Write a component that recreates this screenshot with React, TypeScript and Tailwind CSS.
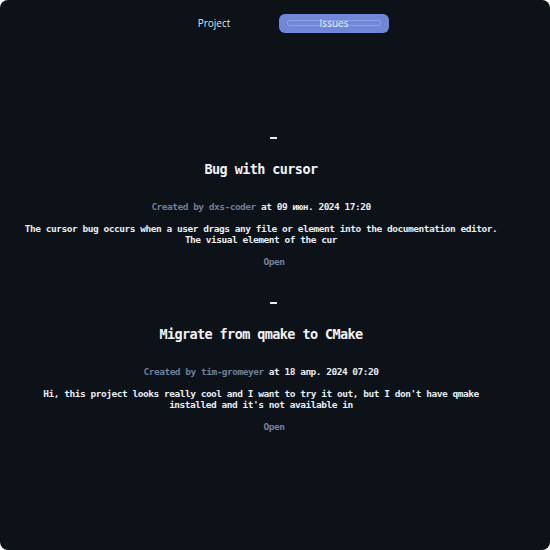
import React from "react";

const mono = { fontFamily: '"DejaVu Sans Mono", "Liberation Mono", monospace' };

function Issue({ title, author, date, body }: { title: string; author: string; date: string; body: React.ReactNode }) {
  return (
    <div className="flex flex-col items-center text-center" style={mono}>
      <div className="h-[2px] w-[7px] bg-[#e6edf3] ml-[-4px]" />
      <div className="mr-[28px] flex flex-col items-center">
        <div className="mt-[22px] text-[13.5px] font-bold leading-[16px] tracking-[-0.6px] text-[#f0f3f6]">{title}</div>
        <div className="mt-[24px] text-[9.5px] font-bold leading-[12px] tracking-[-0.5px]">
          <span className="text-[#6e7f99]">Created by {author}</span>
          <span className="text-[#e6edf3]"> at {date}</span>
        </div>
        <div className="mt-[10px] text-[9.5px] font-bold leading-[11px] tracking-[-0.47px] text-[#e6edf3]">{body}</div>
      </div>
      <div className="mt-[11px] text-[9.5px] font-bold leading-[12px] tracking-[-0.45px] text-[#72839d] ml-[-2px]">Open</div>
    </div>
  );
}

export default function App() {
  return (
    <div className="w-[550px] h-[550px] bg-white">
      <div className="w-full h-full bg-[#0d1118] rounded-[8px] flex flex-col">
        <div className="flex items-center pt-[14px] pl-[159px]" style={{ fontFamily: '"Open Sans", "Noto Sans", sans-serif' }}>
          <div className="w-[110px] h-[19px] flex items-center justify-center text-[10px] text-[#dde6f5]">Project</div>
          <div className="ml-[10px] w-[110px] h-[19px] rounded-[6px] bg-[#7087d8] flex items-center justify-center relative text-[10px] text-[#e8ecfa]">
            <div className="absolute left-[8px] right-[8px] top-[6px] h-[6px] rounded-[2px] border border-[#8da0e2]" />
            <span className="relative">Issues</span>
          </div>
        </div>
        <div className="mt-[104px] flex flex-col gap-[34px]">
          <Issue
            title="Bug with cursor"
            author="dxs-coder"
            date="09 июн. 2024 17:20"
            body={<>The cursor bug occurs when a user drags any file or element into the documentation editor.<br />The visual element of the cur</>}
          />
          <Issue
            title="Migrate from qmake to CMake"
            author="tim-gromeyer"
            date="18 апр. 2024 07:20"
            body={<>Hi, this project looks really cool and I want to try it out, but I don't have qmake<br />installed and it's not available in</>}
          />
        </div>
      </div>
    </div>
  );
}
